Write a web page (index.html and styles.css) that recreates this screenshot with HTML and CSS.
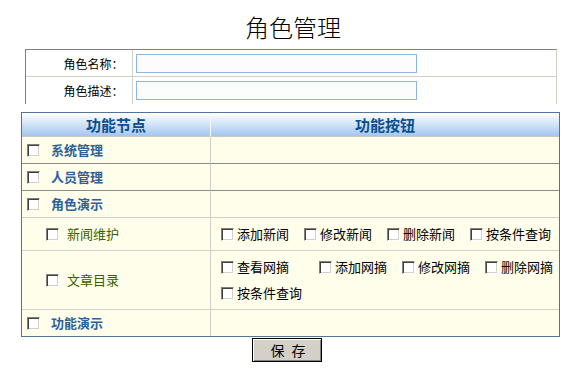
FILE: index.html
```html
<!DOCTYPE html>
<html lang="zh-CN">
<head>
    <meta charset="UTF-8">
    <title>角色管理</title>
    <link rel="stylesheet" href="styles.css">
</head>
<body>
    <h1 class="title">角色管理</h1>

    <table class="role-form">
        <tr class="first">
            <td class="label">角色名称：</td>
            <td><input type="text" class="text-input"></td>
        </tr>
        <tr>
            <td class="label">角色描述：</td>
            <td><input type="text" class="text-input"></td>
        </tr>
    </table>

    <table class="func-table">
        <tr>
            <th class="col-node">功能节点</th>
            <th class="col-btn">功能按钮</th>
        </tr>
        <tr class="dark-line">
            <td class="node lv1"><input type="checkbox" class="chk">系统管理</td>
            <td class="btns"></td>
        </tr>
        <tr class="dark-line">
            <td class="node lv1"><input type="checkbox" class="chk">人员管理</td>
            <td class="btns"></td>
        </tr>
        <tr>
            <td class="node lv1"><input type="checkbox" class="chk">角色演示</td>
            <td class="btns"></td>
        </tr>
        <tr>
            <td class="node lv2"><input type="checkbox" class="chk">新闻维护</td>
            <td class="btns">
                <div class="btn-list">
                    <label class="item"><input type="checkbox" class="chk">添加新闻</label>
                    <label class="item"><input type="checkbox" class="chk">修改新闻</label>
                    <label class="item"><input type="checkbox" class="chk">删除新闻</label>
                    <label class="item"><input type="checkbox" class="chk">按条件查询</label>
                </div>
            </td>
        </tr>
        <tr>
            <td class="node lv2"><input type="checkbox" class="chk">文章目录</td>
            <td class="btns">
                <div class="btn-list">
                    <label class="item wide"><input type="checkbox" class="chk">查看网摘</label>
                    <label class="item"><input type="checkbox" class="chk">添加网摘</label>
                    <label class="item"><input type="checkbox" class="chk">修改网摘</label>
                    <label class="item"><input type="checkbox" class="chk">删除网摘</label>
                    <label class="item"><input type="checkbox" class="chk">按条件查询</label>
                </div>
            </td>
        </tr>
        <tr class="last">
            <td class="node lv1"><input type="checkbox" class="chk">功能演示</td>
            <td class="btns"></td>
        </tr>
    </table>

    <div class="actions">
        <button class="save-btn">保 存</button>
    </div>
</body>
</html>
```

FILE: styles.css
```css
* {
    box-sizing: border-box;
}

body {
    margin: 0;
    background-color: white;
    color: black;
    font-family: "Noto Sans CJK SC", "DejaVu Sans", sans-serif;
    font-size: 12px;
}

.title {
    margin: 12px 0 7px;
    padding-left: 5px;
    font-size: 24px;
    font-weight: 300;
    line-height: 30px;
    text-align: center;
}

/* top form */
.role-form {
    width: 532px;
    margin: 0 auto;
    border-collapse: separate;
    border-spacing: 0;
    border-top: 1px solid #808080;
    border-left: 1px solid #808080;
    border-right: 1px solid #d4d0c8;
}

.role-form td {
    padding: 0;
    height: 27px;
}

.role-form .first td {
    border-bottom: 1px solid #d4d0c8;
}

.role-form .label {
    width: 107px;
    padding-right: 8px;
    text-align: right;
    font-size: 12px;
    border-right: 1px solid #d4d0c8;
}

.text-input {
    display: block;
    width: 281px;
    height: 19px;
    margin-left: 3px;
    border: 1px solid #8cb6e4;
    background: #fcfcfc;
    outline: none;
}

/* function table */
.func-table {
    width: 539px;
    margin: 8px auto 0;
    border-collapse: separate;
    border-spacing: 0;
    border: 1px solid #557399;
}

.func-table th {
    height: 24px;
    padding: 0;
    background: linear-gradient(#ffffff, #a3c6f0);
    color: #0b4e8e;
    font-size: 15px;
    font-weight: bold;
    border-bottom: 1px solid #c8c8c0;
}

.func-table .col-node {
    width: 189px;
    border-right: 1px solid #f4f8fc;
}

.func-table td {
    padding: 0;
    background-color: #fefeeb;
    border-bottom: 1px solid #d0d0c8;
    line-height: 26px;
}

.func-table .dark-line td {
    border-bottom-color: #8a8a8a;
}

.func-table .last td {
    border-bottom: none;
}

.func-table .node {
    border-right: 1px solid #d0d0c8;
    white-space: nowrap;
}

.node.lv1 {
    padding-left: 5px;
    color: #2e6199;
    font-size: 13px;
    font-weight: bold;
}

.node.lv1 .chk {
    margin-right: 11px;
}

.node.lv2 {
    padding-left: 24px;
    color: #3a5e00;
    font-size: 13px;
}

.node.lv2 .chk {
    margin-right: 8px;
}

.btns {
    padding: 3px 0 3px 10px !important;
}

.btns:empty {
    padding: 0 !important;
}

.btn-list {
    display: flex;
    flex-wrap: wrap;
    column-gap: 15px;
}

.item {
    display: flex;
    align-items: center;
    font-size: 13px;
    white-space: nowrap;
}

.item.wide {
    margin-right: 15px;
}

.item .chk {
    margin-right: 3px;
}

.chk {
    appearance: none;
    -webkit-appearance: none;
    display: inline-block;
    width: 13px;
    height: 13px;
    margin: 0;
    vertical-align: -2px;
    background: #fff;
    border: 1px solid;
    border-color: #808080 #ffffff #ffffff #808080;
    box-shadow: inset 1px 1px #404040, inset -1px -1px #d4d0c8;
}

.actions {
    padding-right: 7px;
    text-align: center;
}

.save-btn {
    width: 70px;
    height: 24px;
    margin-top: 1px;
    padding: 0 0 0 2px;
    background: #d4d0c8;
    border: 1px solid #000;
    box-shadow: inset 1px 1px #ffffff, inset -1px -1px #808080;
    font-family: "Noto Sans CJK SC", sans-serif;
    font-size: 14px;
    line-height: 20px;
    word-spacing: 4px;
    color: black;
}
```
